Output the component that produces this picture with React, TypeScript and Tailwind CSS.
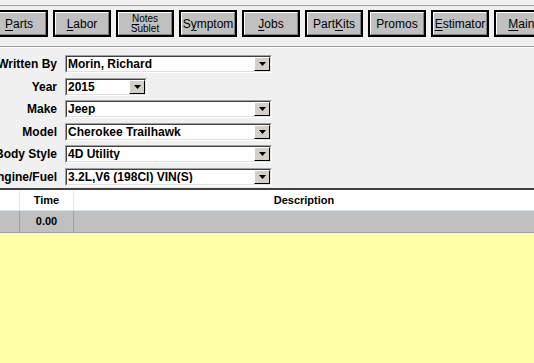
import React from "react";

type Btn = { label: React.ReactNode };

const u = (s: string) => <span className="underline underline-offset-2">{s}</span>;

const buttons: Btn[] = [
  { label: <>{u("P")}arts</> },
  { label: <>{u("L")}abor</> },
  {
    label: (
      <span className="flex flex-col items-center text-[10px] leading-[10px]">
        <span>{u("N")}otes</span>
        <span>Sublet</span>
      </span>
    ),
  },
  { label: <>S{u("y")}mptom</> },
  { label: <>{u("J")}obs</> },
  { label: <>Part{u("K")}its</> },
  { label: <>Promos</> },
  { label: <>{u("E")}stimator</> },
  { label: <>{u("M")}aint</> },
];

function ToolButton({ label }: Btn) {
  return (
    <div className="w-[58px] h-[27px] shrink-0 border-2 border-black">
      <div className="h-full w-full border border-t-white border-l-white border-b-[#808080] border-r-[#808080] bg-[#c0c0c0] flex items-center justify-center text-[12px] text-black whitespace-nowrap">
        {label}
      </div>
    </div>
  );
}

function Arrow() {
  return (
    <div className="h-full w-[16px] border border-t-white border-l-white border-b-black border-r-black bg-[#d4d0c8] flex items-center justify-center">
      <svg width="7" height="4" viewBox="0 0 7 4">
        <polygon points="0,0 7,0 3.5,4" fill="#000" />
      </svg>
    </div>
  );
}

function Combo({ value, width }: { value: string; width: string }) {
  return (
    <div className={`${width} h-[18px] border border-t-[#a0a0a0] border-l-[#a0a0a0] border-b-white border-r-white`}>
      <div className="h-full w-full border border-t-[#404040] border-l-[#404040] border-b-[#e0e0e0] border-r-[#e0e0e0] bg-white flex items-center">
        <span className="flex-1 pl-[1px] text-[12px] font-bold leading-none whitespace-nowrap overflow-hidden">{value}</span>
        <Arrow />
      </div>
    </div>
  );
}

const fields = [
  { label: "Written By", value: "Morin, Richard", width: "w-[207px]" },
  { label: "Year", value: "2015", width: "w-[82px]" },
  { label: "Make", value: "Jeep", width: "w-[207px]" },
  { label: "Model", value: "Cherokee Trailhawk", width: "w-[207px]" },
  { label: "Body Style", value: "4D Utility", width: "w-[207px]" },
  { label: "Engine/Fuel", value: "3.2L,V6 (198CI) VIN(S)", width: "w-[207px]" },
];

export default function App() {
  return (
    <div
      className="w-[534px] h-[363px] overflow-hidden bg-[#f0f0f0] text-black flex flex-col"
      style={{ fontFamily: '"Liberation Sans", Arial, sans-serif' }}
    >
      {/* Toolbar */}
      <div className="mt-[5px] border-t border-[#a0a0a0] h-[41px] flex items-start">
        <div className="flex gap-[5px] ml-[-10px] mt-[4px]">
          {buttons.map((b, i) => (
            <ToolButton key={i} label={b.label} />
          ))}
        </div>
      </div>
      <div className="border-t border-[#a0a0a0] border-b border-b-white" />

      {/* Vehicle form */}
      <div className="flex flex-col gap-[4.5px] pt-[7px] h-[140px]">
        {fields.map((f) => (
          <div key={f.label} className="flex items-center h-[18px]">
            <div className="w-[57px] shrink-0 flex justify-end text-[12px] font-bold whitespace-nowrap">
              {f.label}
            </div>
            <div className="ml-[8px]">
              <Combo value={f.value} width={f.width} />
            </div>
          </div>
        ))}
      </div>

      {/* Grid */}
      <div className="border-t-2 border-[#404040]" />
      <div className="flex h-[21px] bg-white border-b border-[#d5dfe9] text-[11px] font-bold">
        <div className="w-[20px] border-r border-[#e3ebf5]" />
        <div className="w-[54px] border-r border-[#e3ebf5] flex items-center justify-center">Time</div>
        <div className="flex-1 flex items-center justify-center">Description</div>
      </div>
      <div className="flex h-[22px] bg-[#c0c0c0] border-b border-[#a0a0a0] text-[11px] font-bold">
        <div className="w-[20px] border-r border-[#a0a0a0]" />
        <div className="w-[54px] border-r border-[#a0a0a0] flex items-center justify-center">0.00</div>
        <div className="flex-1" />
      </div>
      <div className="flex-1 bg-[#ffffa8]" />
    </div>
  );
}
